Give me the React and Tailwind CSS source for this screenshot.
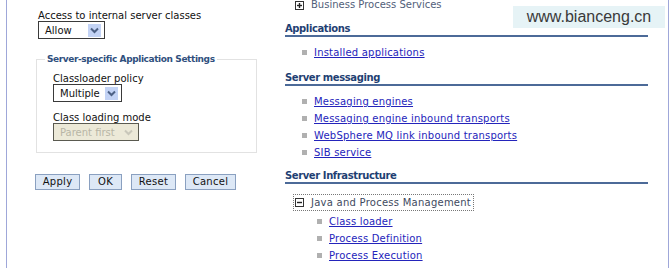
import React from 'react';

const Chevron = ({ disabled }) => (
  <span
    className={`ml-auto mr-[3px] flex h-[13px] w-[13px] items-center justify-center ${
      disabled ? 'bg-[#ece9d8]' : 'bg-[#c3d3f5]'
    }`}
  >
    <svg width="9" height="7" viewBox="0 0 9 7">
      <path d="M1 1.5 L4.5 5 L8 1.5" fill="none" stroke={disabled ? '#c9c7ba' : '#4d6185'} strokeWidth="2" />
    </svg>
  </span>
);

const Select = ({ value, width, disabled }) => (
  <div
    className={`flex h-[18px] items-center border pl-[6px] text-[10px] ${
      disabled ? 'border-[#5a5a50] bg-[#ece9d8] text-[#b8b6a6]' : 'border-[#3a3a3a] bg-white text-[#111]'
    } ${width}`}
  >
    <span>{value}</span>
    <Chevron disabled={disabled} />
  </div>
);

const Button = ({ label, width }) => (
  <button className={`h-[16px] border border-[#8aa0c0] bg-[#dde8f6] text-[10px] leading-none tracking-[0.3px] text-[#111] ${width}`}>
    {label}
  </button>
);

const Heading = ({ children }) => (
  <div className="mr-[20px] border-b-2 border-[#4c6a98] text-[10px] font-bold leading-[12px] tracking-[-0.4px] text-[#1f3f73]">
    {children}
  </div>
);

const Item = ({ children }) => (
  <div className="flex h-[17px] items-center">
    <span className="mr-[7px] h-[5px] w-[5px] bg-[#b0b0b0]" />
    <a className="text-[10px] tracking-[0.2px] text-[#2424bb] underline" href="#">
      {children}
    </a>
  </div>
);

const Box = ({ minus }) => (
  <span className="flex h-[9px] w-[9px] items-center justify-center border border-[#333] bg-white">
    <svg width="7" height="7" viewBox="0 0 7 7">
      <path d="M1 3.5 H6" stroke="#222" strokeWidth="1.4" />
      {!minus && <path d="M3.5 1 V6" stroke="#222" strokeWidth="1.4" />}
    </svg>
  </span>
);

export default function App() {
  return (
    <div
      className="relative flex h-[275px] w-[671px] overflow-hidden bg-white"
      style={{ fontFamily: '"DejaVu Sans", Verdana, sans-serif' }}
    >
      <div className="ml-[6px] h-[268px] w-[275px] border-l border-[#9fa7d9] pl-[31px] pt-[10px]">
        <div className="text-[10px] leading-[11px] text-[#111]">Access to internal server classes</div>
        <Select value="Allow" width="w-[67px]" />

        <fieldset className="ml-[-2px] mt-[15px] h-[99px] w-[221px] border border-[#e2e2e2] pl-[16px]">
          <legend className="ml-[-8px] px-[2px] text-[9px] font-bold leading-[10px] tracking-[-0.4px] text-[#30507e]">
            Server-specific Application Settings
          </legend>
          <div className="mt-[9px] text-[10px] leading-[11px] text-[#111]">Classloader policy</div>
          <Select value="Multiple" width="w-[69px]" />
          <div className="mt-[10px] text-[10px] leading-[11px] text-[#111]">Class loading mode</div>
          <Select value="Parent first" width="w-[86px]" disabled />
        </fieldset>

        <div className="ml-[-3px] mt-[21px] flex gap-[9px]">
          <Button label="Apply" width="w-[45px]" />
          <Button label="OK" width="w-[33px]" />
          <Button label="Reset" width="w-[45px]" />
          <Button label="Cancel" width="w-[51px]" />
        </div>
      </div>

      <div className="ml-[4px] mr-[2px] h-[268px] flex-1 border-r border-[#9fa7d9]">
        <div className="ml-[10px] flex h-[10px] items-center gap-[7px]">
          <Box />
          <span className="text-[10px] leading-[10px] text-[#52607a]">Business Process Services</span>
        </div>

        <div className="mt-[13px]">
          <Heading>Applications</Heading>
          <div className="ml-[17px] mt-[7px]">
            <Item>Installed applications</Item>
          </div>
        </div>

        <div className="mt-[11px]">
          <Heading>Server messaging</Heading>
          <div className="ml-[17px] mt-[7px]">
            <Item>Messaging engines</Item>
            <Item>Messaging engine inbound transports</Item>
            <Item>WebSphere MQ link inbound transports</Item>
            <Item>SIB service</Item>
          </div>
        </div>

        <div className="mt-[9px]">
          <Heading>Server Infrastructure</Heading>
          <div className="ml-[8px] mt-[10px] flex h-[17px] w-[181px] items-center gap-[7px] border border-dotted border-[#777] pl-[1px]">
            <Box minus />
            <span className="text-[10px] tracking-[0.25px] text-[#3e4a60]">Java and Process Management</span>
          </div>
          <div className="ml-[32px] mt-[2px]">
            <Item>Class loader</Item>
            <Item>Process Definition</Item>
            <Item>Process Execution</Item>
          </div>
        </div>
      </div>

      <div
        className="absolute left-[513px] top-[6px] flex h-[22px] w-[152px] items-center justify-center bg-[#e6f3f6] text-[16px] text-[#3a3a3a]"
        style={{ fontFamily: '"Liberation Sans", Arial, sans-serif' }}
      >
        www.bianceng.cn
      </div>
    </div>
  );
}
